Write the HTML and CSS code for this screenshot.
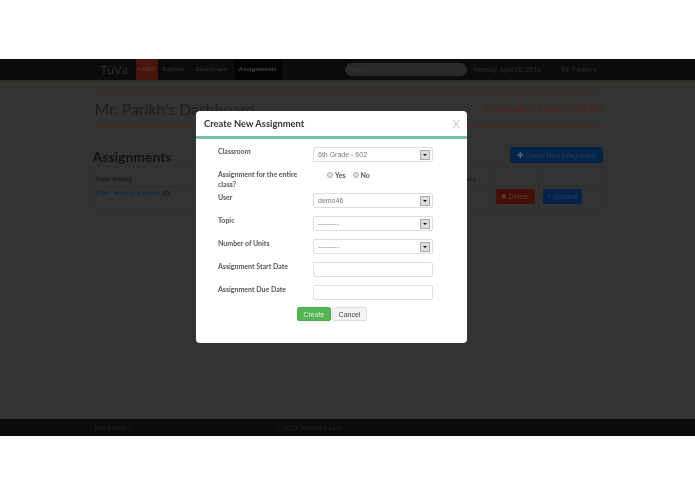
FILE: index.html
```html
<!DOCTYPE html>
<html lang="en">
<head>
  <meta charset="UTF-8">
  <title>Assignments</title>
  <link rel="stylesheet" href="styles.css">
</head>
<body>
  <div class="app">
    <div class="navbar">
      <div class="nav-inner">
        <span class="brand">TuVa</span>
        <span class="labs">LABS</span>
        <span class="nav-link nav-explore">Explore</span>
        <span class="nav-link nav-dashboard">Dashboard</span>
        <span class="nav-link active">Assignments</span>
        <span class="search">Search</span>
        <span class="nav-date">Monday, April 08, 2013</span>
        <span class="nav-user">Mr. Parikh ▾</span>
      </div>
    </div>

    <div class="content">
      <div class="page-head">
        <h1>Mr. Parikh's Dashboard</h1>
        <span class="code">TuvaLabs | Code : c6M0i</span>
      </div>

      <div class="section-head">
        <h2>Assignments</h2>
        <button class="btn btn-blue btn-create"><span class="plus">✚</span> Create New Assignment</button>
      </div>

      <div class="table">
        <div class="row row-head">
          <span class="cell-topic">Topic (Units)</span>
          <span class="cell-action"></span>
          <span class="cell-action cell-last"></span>
          <span class="cell-class">Class</span>
        </div>
        <div class="row">
          <a class="cell-topic">6.RP - What is a Ratio? <span>(2)</span></a>
          <span class="cell-action"><button class="btn btn-red">✖ Delete</button></span>
          <span class="cell-action cell-last"><button class="btn btn-blue">+ Student</button></span>
        </div>
      </div>
    </div>

    <div class="footer">
      <div class="footer-inner">
        <span class="help">Need Help ?</span>
        <span>© 2013 Tuvalabs LLC</span>
      </div>
    </div>

    <div class="modal">
      <div class="modal-head">
        <h3>Create New Assignment</h3>
        <span class="close">X</span>
      </div>
      <form class="modal-form">
        <div class="form-row">
          <label>Classroom</label>
          <div class="select">6th Grade - 602<span class="arrow"></span></div>
        </div>
        <div class="form-row">
          <label>Assignment for the entire class?</label>
          <div class="radios">
            <span class="radio"></span><span class="radio-text">Yes</span>
            <span class="radio"></span><span class="radio-text">No</span>
          </div>
        </div>
        <div class="form-row">
          <label>User</label>
          <div class="select">demo46<span class="arrow"></span></div>
        </div>
        <div class="form-row">
          <label>Topic</label>
          <div class="select">---------<span class="arrow"></span></div>
        </div>
        <div class="form-row">
          <label>Number of Units</label>
          <div class="select">---------<span class="arrow"></span></div>
        </div>
        <div class="form-row">
          <label>Assignment Start Date</label>
          <div class="select"></div>
        </div>
        <div class="form-row">
          <label>Assignment Due Date</label>
          <div class="select"></div>
        </div>
        <div class="form-actions">
          <button type="button" class="btn-create-ok">Create</button>
          <button type="button" class="btn-cancel">Cancel</button>
        </div>
      </form>
    </div>
  </div>
</body>
</html>
```

FILE: styles.css
```css
body {
  margin: 0;
  background-color: #fff;
  font-family: "Liberation Sans", Arial, sans-serif;
}
.app {
  position: relative;
  margin-top: 59px;
  height: 377px;
  background-color: #333;
  display: flex;
  flex-direction: column;
  overflow: hidden;
}
.navbar {
  height: 21px;
  background-color: #0c0c0c;
  border-bottom: 2px solid #2c3018;
}
.nav-inner {
  width: 510px;
  margin: 0 auto;
  height: 21px;
  display: flex;
  align-items: center;
  font-size: 6px;
  color: #2b2b2b;
  white-space: nowrap;
  filter: blur(0.6px);
}
.brand {
  font-family: "Lato", sans-serif;
  font-size: 12px;
  font-weight: 300;
  letter-spacing: 1px;
  color: #4a4a4a;
  margin-left: 8px;
  width: 35px;
}
.labs {
  width: 22px;
  height: 21px;
  line-height: 21px;
  text-align: center;
  background-color: #46160f;
  color: #6a3028;
  font-weight: bold;
}
.nav-link {
  padding: 0 5px;
  height: 21px;
  line-height: 21px;
  font-weight: bold;
}
.nav-explore {
  margin-right: 1px;
}
.nav-dashboard {
  margin-right: 2px;
}
.nav-link.active {
  background-color: #050505;
  color: #444;
}
.search {
  margin-left: 63px;
  box-sizing: border-box;
  width: 122px;
  height: 13px;
  line-height: 13px;
  padding-left: 3px;
  border-radius: 7px;
  background-color: #2a2a2a;
  color: #3a3a3a;
}
.nav-date {
  margin-left: 7px;
  width: 88px;
  font-size: 6.6px;
}
.nav-user {
  font-size: 6.6px;
}
.content {
  flex: 1;
  width: 510px;
  margin: 0 auto;
  filter: blur(0.6px);
}
.page-head {
  box-sizing: content-box;
  margin-top: 9px;
  height: 32px;
  padding-bottom: 3px;
  border-top: 1px solid #4a241d;
  border-bottom: 1px solid #4a241d;
  display: flex;
  justify-content: space-between;
  align-items: center;
}
.page-head h1 {
  margin: 0 0 0 2px;
  font-family: "Lato", sans-serif;
  font-size: 15.8px;
  font-weight: 400;
  color: #1f1f1f;
}
.code {
  font-family: "Liberation Serif", serif;
  font-size: 11.7px;
  color: #4f221a;
  white-space: nowrap;
}
.section-head {
  margin-top: 19px;
  height: 18px;
  display: flex;
  justify-content: space-between;
  align-items: flex-start;
}
.section-head h2 {
  margin: 0;
  font-family: "Lato", sans-serif;
  font-size: 14px;
  line-height: 20px;
  font-weight: 700;
  color: #141414;
}
.btn {
  border: none;
  border-radius: 2px;
  height: 15px;
  width: 39px;
  padding: 0;
  font-size: 7px;
  font-family: "Liberation Sans", Arial, sans-serif;
}
.btn-blue {
  background-color: #062448;
  color: #264060;
}
.btn-red {
  background-color: #451008;
  color: #6a3a34;
}
.btn-create {
  width: 93px;
  height: 16px;
  font-size: 6.5px;
}
.plus {
  font-size: 8px;
  color: #4a6a8a;
}
.table {
  margin-top: 1px;
  border: 1px solid #2f2f2f;
  border-radius: 2px;
  font-size: 6px;
  font-weight: bold;
  color: #161616;
}
.row {
  position: relative;
  display: flex;
  height: 24px;
}
.row-head {
  border-bottom: 1px solid #2f2f2f;
  height: 19px;
  line-height: 24px;
}
.row a {
  color: #12283c;
  line-height: 13px;
}
.row a span {
  color: #161616;
}
.cell-topic {
  box-sizing: border-box;
  width: 399px;
  padding-left: 2px;
}
.cell-action {
  box-sizing: border-box;
  width: 46px;
  padding: 2px 0 0 2px;
  border-left: 1px solid #2f2f2f;
}
.cell-last {
  flex: 1;
  padding-left: 3px;
}
.cell-class {
  position: absolute;
  left: 366px;
}
.footer {
  height: 16px;
  background-color: #0c0c0c;
  border-top: 1px solid #070707;
}
.footer-inner {
  width: 510px;
  margin: 0 auto;
  display: flex;
  line-height: 16px;
  font-size: 6.5px;
  font-weight: bold;
  color: #1d1d1d;
  filter: blur(0.6px);
}
.help {
  margin-left: 2px;
  width: 182px;
}
.modal {
  position: absolute;
  left: 196px;
  top: 52px;
  width: 271px;
  height: 232px;
  background-color: #fff;
  border-radius: 4px;
}
.modal-head {
  height: 25px;
  border-bottom: 3px solid #76c1a5;
  display: flex;
  justify-content: space-between;
  align-items: center;
  padding: 0 7px 0 8px;
}
.modal-head h3 {
  margin: 0;
  font-family: "Lato", sans-serif;
  font-size: 9.4px;
  font-weight: 700;
  color: #333;
  filter: blur(0.3px);
}
.close {
  font-family: "Lato", sans-serif;
  font-size: 11px;
  color: #ccc;
  filter: blur(0.3px);
}
.modal-form {
  padding: 8px 34px 0 22px;
  filter: blur(0.3px);
}
.form-row {
  display: flex;
  height: 23px;
  font-size: 7px;
}
.form-row label {
  width: 95px;
  line-height: 10px;
  margin-top: -1px;
  font-family: "Lato", sans-serif;
  font-size: 7px;
  font-weight: 700;
  color: #555;
}
.select {
  position: relative;
  box-sizing: border-box;
  width: 120px;
  height: 15px;
  line-height: 13px;
  padding-left: 4px;
  border: 1px solid #ddd;
  border-radius: 2px;
  color: #777;
}
.arrow {
  position: absolute;
  right: 2px;
  top: 2px;
  width: 10px;
  height: 10px;
  background-color: #ddd;
  border: 1px solid #aaa;
  box-sizing: border-box;
}
.arrow::after {
  content: "";
  position: absolute;
  left: 2px;
  top: 3px;
  border-left: 2px solid transparent;
  border-right: 2px solid transparent;
  border-top: 2px solid #111;
}
.radios {
  display: flex;
  align-items: center;
  height: 10px;
  margin-left: 14px;
}
.radio {
  width: 6px;
  height: 6px;
  box-sizing: border-box;
  border: 1px solid #aaa;
  border-radius: 50%;
  background-color: #e4e4e4;
  margin-right: 2px;
}
.radio-text {
  font-family: "Lato", sans-serif;
  font-size: 7px;
  font-weight: 700;
  color: #555;
  margin-right: 7px;
}
.form-actions {
  display: flex;
  justify-content: center;
  gap: 1px;
  margin: -1px 0 0 13px;
}
.form-actions button {
  height: 14px;
  border-radius: 2px;
  font-size: 7px;
  font-family: "Liberation Sans", Arial, sans-serif;
  padding: 0;
}
.btn-create-ok {
  width: 34px;
  border: 1px solid #4cae4c;
  background-color: #55b555;
  color: #d8efd8;
}
.btn-cancel {
  width: 35px;
  border: 1px solid #ddd;
  background-color: #f3f3f3;
  color: #444;
}
```
